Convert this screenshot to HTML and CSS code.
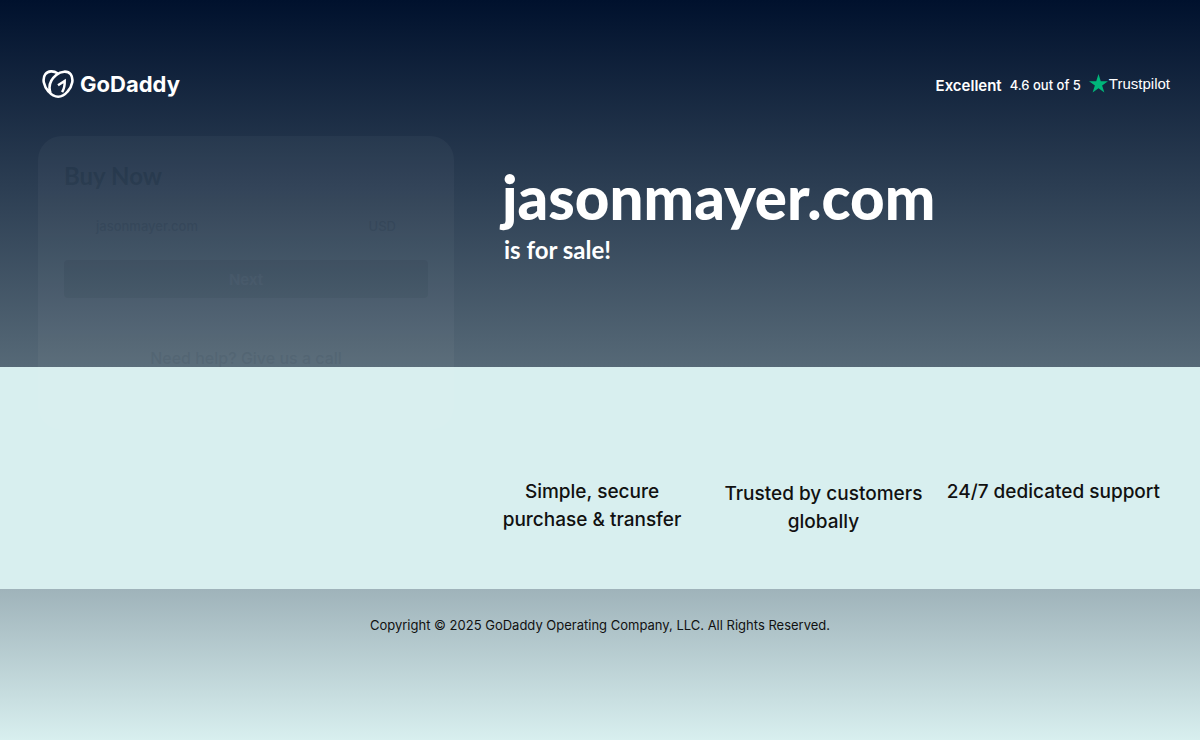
FILE: index.html
```
<!DOCTYPE html>
<html lang="en">
<head>
    <meta charset="UTF-8">
    <meta name="viewport" content="width=device-width, initial-scale=1.0">
    <title>jasonmayer.com is for sale</title>
    <link rel="stylesheet" href="styles.css">
</head>
<body>

    <div class="hero">
        <header class="topbar">
            <a class="logo" href="#" aria-label="GoDaddy">
                <svg class="logo-mark" viewBox="0 0 32 28" fill="none" stroke="#fff" stroke-width="2.6" stroke-linejoin="round">
                    <path d="M15.500 3.300C11.500 .5 6 .7 3.300 4.300c-3.200 4.400-1.700 12 3.200 17.200 2.800 3.200 6.400 5.200 9.700 5.200s6.700-2 9.400-5.200c4.900-5.200 6.300-12.800 3.100-17.200C25.600 .5 19.200 .9 14.200 5 8.200 10 6.200 16.500 8.500 23"/>
                    <path d="M16 15.200l6.700-4.300c.2 4.800-.7 8.200-2.600 11.300" stroke-width="2.500" stroke-linejoin="miter"/>
                </svg>
                <span class="logo-text">GoDaddy</span>
            </a>
            <div class="rating">
                <strong>Excellent</strong>
                <span class="score">4.6 out of 5</span>
                <a class="trustpilot" href="#">
                    <svg class="star" viewBox="0 0 20 20"><path fill="#00b67a" d="M10 0l2.400 7.500H20l-6.200 4.600 2.400 7.400L10 14.900l-6.200 4.600 2.400-7.400L0 7.500h7.600z"/></svg>
                    <span>Trustpilot</span>
                </a>
            </div>
        </header>
    </div>

    <main class="content">
        <section class="card">
            <h2>Buy Now</h2>
            <div class="price-row">
                <span>jasonmayer.com</span>
                <span>USD</span>
            </div>
            <button type="button">Next</button>
            <p>Need help? Give us a call</p>
        </section>

        <div class="details">
            <div class="title">
                <h1>jasonmayer.com</h1>
                <p>is for sale!</p>
            </div>
            <div class="features">
                <p>Simple, secure purchase &amp; transfer</p>
                <p class="trusted">Trusted by customers globally</p>
                <p>24/7 dedicated support</p>
            </div>
        </div>
    </main>

    <footer class="footer">
        Copyright © 2025 GoDaddy Operating Company, LLC. All Rights Reserved.
    </footer>

</body>
</html>
```
FILE: styles.css
```
* {
    box-sizing: border-box;
}

body {
    margin: 0;
    min-height: 100vh;
    display: flex;
    flex-direction: column;
    font-family: Inter, "Open Sans", sans-serif;
    color: #111;
    /* dark band behind the header and title */
    background: linear-gradient(#00112d, #566977) no-repeat top / 100% 367px, #d8efef;
}

h1, h2, p {
    margin: 0;
}

a {
    color: inherit;
    text-decoration: none;
}

.topbar {
    display: flex;
    justify-content: space-between;
    align-items: center;
    padding: 68px 30px 0 42px;
    color: #fff;
}

.logo {
    display: flex;
    align-items: center;
    gap: 6px;
}

.logo-mark {
    width: 32px;
    height: 28px;
}

.logo-text {
    font-size: 22px;
    font-weight: 700;
    line-height: 32px;
}

.rating {
    display: flex;
    align-items: center;
    gap: 8px;
    padding-top: 2px;
    font-size: 13px;
}

.rating strong {
    font-size: 15px;
    font-weight: 600;
}

.score {
    font-weight: 500;
}

.trustpilot {
    display: flex;
    align-items: center;
    gap: 1px;
    padding-bottom: 4px;
    font-family: "Liberation Sans", sans-serif;
    font-size: 15px;
}

.star {
    width: 19px;
    height: 19px;
}

.content {
    display: grid;
    grid-template-columns: 416px 1fr;
    gap: 48px;
    align-items: start;
    padding: 36px 30px 53px 38px;
}

.card {
    opacity: 0.03;
    padding: 24px 26px 60px;
    border-radius: 24px;
    background: #fff;
    color: #555;
}

.card h2 {
    color: #222;
    font-family: Lato, sans-serif;
    font-size: 24px;
    line-height: 32px;
}

.price-row {
    display: flex;
    justify-content: space-between;
    padding: 22px 32px 22px;
    font-size: 13px;
    font-weight: 500;
    line-height: 24px;
}

.card button {
    width: 100%;
    height: 38px;
    border: 0;
    border-radius: 4px;
    background: #777;
    color: #fff;
    font: 600 15px Inter, sans-serif;
}

.card p {
    padding-top: 48px;
    text-align: center;
    font-size: 16px;
    font-weight: 500;
    line-height: 24px;
}

.title {
    padding: 29px 0 0;
    color: #fff;
    font-family: Lato, sans-serif;
}

.title h1 {
    font-size: 60px;
    font-weight: 900;
    line-height: 64px;
}

.title p {
    padding: 3px 0 0 2px;
    font-size: 24px;
    font-weight: 700;
    line-height: 36px;
}

.features {
    display: grid;
    grid-template-columns: 180px 1fr auto;
    gap: 20px;
    padding: 210px 10px 0 0;
    text-align: center;
    font-size: 19px;
    font-weight: 500;
    line-height: 28px;
}

.features .trusted {
    padding: 2px 0 0 18px;
}

.footer {
    flex: 1;
    padding: 24px;
    background: linear-gradient(#9fb3ba, #d8efef);
    text-align: center;
    font-size: 13px;
    line-height: 24px;
}
```
